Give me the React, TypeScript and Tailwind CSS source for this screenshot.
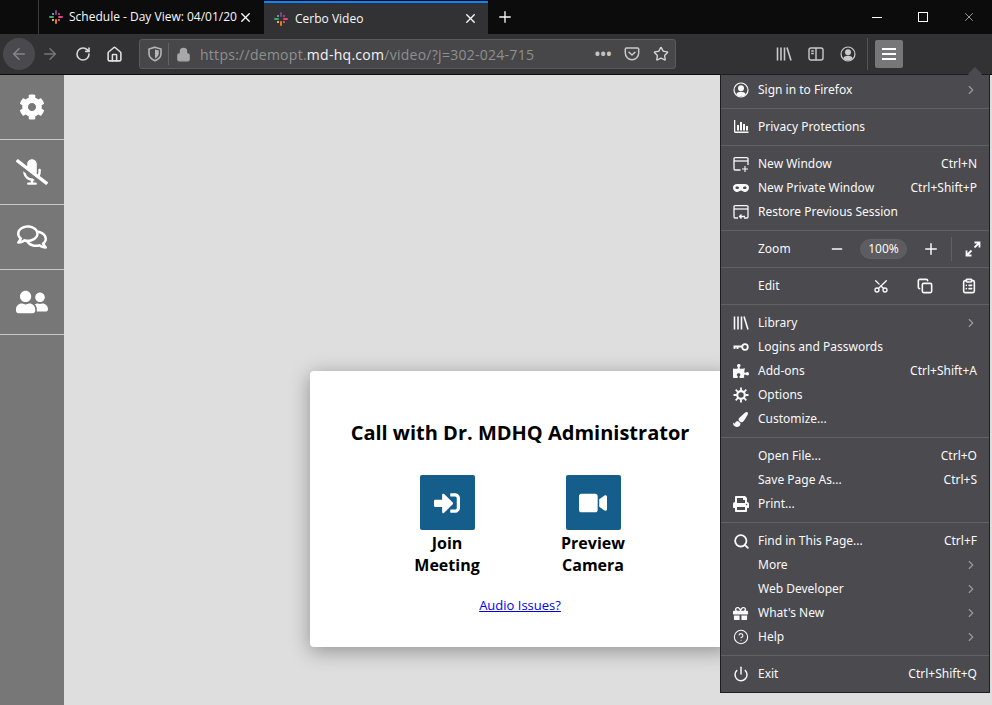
import type { ReactNode } from "react";
import { FaCog, FaMicrophoneSlash, FaRegComments, FaUserFriends, FaSignInAlt, FaVideo, FaPuzzlePiece, FaPaintBrush, FaPrint, FaGift } from "react-icons/fa";
import { Search, X, Plus, Minus, ChevronRight, ArrowLeft, ArrowRight, RotateCw, Home, Lock, Star, Scissors, Copy, ClipboardList, Power, CircleHelp } from "lucide-react";

// Small inline drawings for the Firefox chrome icons
function Favicon() {
  return (
    <svg width="16" height="16" viewBox="0 0 16 16">
      <rect x="7" y="1" width="2" height="5" rx="1" fill="#8e3a8c" />
      <rect x="7" y="10" width="2" height="5" rx="1" fill="#e8762d" />
      <rect x="1" y="7" width="5" height="2" rx="1" fill="#3fa66b" />
      <rect x="10" y="7" width="5" height="2" rx="1" fill="#d4497f" />
      <rect x="4" y="4" width="2" height="2" fill="#3aa6a0" />
      <rect x="10" y="4" width="2" height="2" fill="#c22f6d" />
      <rect x="4" y="10" width="2" height="2" fill="#e3b23c" />
      <rect x="10" y="10" width="2" height="2" fill="#d9532c" />
    </svg>
  );
}

function LibraryIcon({ size = 16 }: { size?: number }) {
  return (
    <svg width={size} height={size} viewBox="0 0 16 16" fill="none" stroke="currentColor" strokeWidth="1.6">
      <path d="M1.5 1.5v13M5 1.5v13M8.5 1.5v13M11 1.5l4 13" />
    </svg>
  );
}

function AvatarIcon({ size = 16 }: { size?: number }) {
  return (
    <svg width={size} height={size} viewBox="0 0 16 16">
      <circle cx="8" cy="8" r="7" fill="none" stroke="currentColor" strokeWidth="1.2" />
      <circle cx="8" cy="6.2" r="3" fill="currentColor" />
      <path d="M3.2 12.4C4 10.4 6 9.8 8 9.8s4 .6 4.8 2.6A6.5 6.5 0 0 1 8 14.5a6.5 6.5 0 0 1-4.8-2.1z" fill="currentColor" />
    </svg>
  );
}

function SidebarIcon() {
  return (
    <svg width="16" height="16" viewBox="0 0 16 16" fill="none" stroke="currentColor" strokeWidth="1.4">
      <rect x="1" y="2" width="14" height="12" rx="2" />
      <path d="M8 2v12M3.2 5h2.6M3.2 7.5h2.6" />
    </svg>
  );
}

function ShieldIcon() {
  return (
    <svg width="16" height="16" viewBox="0 0 16 16">
      <path d="M8 1.2 14 3v4.5c0 3.6-2.6 6-6 7.3-3.4-1.3-6-3.7-6-7.3V3z" fill="none" stroke="currentColor" strokeWidth="1.6" />
      <path d="M8 3.5 11.8 4.6v3c0 2.2-1.6 3.8-3.8 4.8z" fill="currentColor" />
    </svg>
  );
}

function PocketIcon() {
  return (
    <svg width="16" height="16" viewBox="0 0 16 16" fill="none" stroke="currentColor" strokeWidth="1.5" strokeLinecap="round" strokeLinejoin="round">
      <path d="M2.5 2h11A1.2 1.2 0 0 1 14.7 3.2V7A6.7 6.7 0 0 1 1.3 7V3.2A1.2 1.2 0 0 1 2.5 2z" />
      <path d="M5 6.2 8 9l3-2.8" />
    </svg>
  );
}

function BarsIcon() {
  return (
    <svg width="16" height="16" viewBox="0 0 16 16" fill="currentColor">
      <path d="M1 1h1.3v11.5H15.5V14H2.5A1.5 1.5 0 0 1 1 12.5z" />
      <rect x="4" y="6" width="2" height="5.5" />
      <rect x="7" y="3" width="2" height="8.5" />
      <rect x="10" y="5" width="2" height="6.5" />
      <rect x="13" y="7" width="2" height="4.5" />
    </svg>
  );
}

function NewWindowIcon() {
  return (
    <svg width="16" height="16" viewBox="0 0 16 16" fill="none" stroke="currentColor" strokeWidth="1.3">
      <path d="M7.5 14H2.2A1.2 1.2 0 0 1 1 12.8V2.8A1.2 1.2 0 0 1 2.2 1.6h11.6A1.2 1.2 0 0 1 15 2.8V9" />
      <path d="M1 5h14" />
      <path d="M12 10v6M9 13h6" strokeWidth="1.1" />
    </svg>
  );
}

function RestoreIcon() {
  return (
    <svg width="16" height="16" viewBox="0 0 16 16" fill="none" stroke="currentColor" strokeWidth="1.3">
      <path d="M5 14H2.2A1.2 1.2 0 0 1 1 12.8V2.8A1.2 1.2 0 0 1 2.2 1.6h11.6A1.2 1.2 0 0 1 15 2.8v10A1.2 1.2 0 0 1 13.8 14H11" />
      <path d="M1 5h14" />
      <path d="M12 12.500H6.500M8.500 10.500l-2 2 2 2" />
    </svg>
  );
}

function MaskIcon() {
  return (
    <svg width="16" height="16" viewBox="0 0 16 16">
      <path fillRule="evenodd" fill="currentColor" d="M4 4h8c2.200 0 4 1.300 4 3.500S14.200 12 12 12c-1.800 0-2.800-1.500-4-1.500S5.800 12 4 12C1.800 12 0 9.700 0 7.500S1.800 4 4 4zm.2 2.600c-1 0-1.800.4-1.800 1.100s1 1.300 2 1.300 1.600-.5 1.600-1.100-.8-1.300-1.800-1.300zm7.600 0c-1 0-1.800.7-1.800 1.300S10.600 9 11.600 9s2-.6 2-1.300-.8-1.100-1.800-1.100z" />
    </svg>
  );
}

function KeyIcon() {
  return (
    <svg width="16" height="16" viewBox="0 0 16 16" fill="none" stroke="currentColor">
      <circle cx="12" cy="8" r="2.800" strokeWidth="1.800" />
      <path d="M9 7.500H0.500M1.500 7.500v2.500M4.500 7.500v2.500" strokeWidth="1.800" />
    </svg>
  );
}

function ExpandIcon() {
  return (
    <svg width="16" height="16" viewBox="0 0 16 16" fill="none" stroke="currentColor" strokeWidth="1.800">
      <path d="M9.500 1.500h5v5M14 2 9.500 6.500M6.500 14.500h-5v-5M2 14l4.500-4.500" />
    </svg>
  );
}

function GearOutline() {
  return (
    <svg width="16" height="16" viewBox="0 0 16 16" fill="none" stroke="currentColor">
      <circle cx="8" cy="8" r="3.800" strokeWidth="2.200" />
      <path d="M8 .5v3M8 12.500v3M.5 8h3M12.500 8h3M2.700 2.700l2.100 2.100M11.200 11.200l2.100 2.100M13.300 2.700l-2.100 2.100M4.800 11.200l-2.100 2.100" strokeWidth="1.800" />
    </svg>
  );
}

function Row({ icon, label, shortcut, arrow }: { icon?: ReactNode; label: string; shortcut?: string; arrow?: boolean }) {
  return (
    <div className="flex h-6 items-center pl-[12px] pr-[12px]">
      <span className="flex w-[25px] shrink-0 items-center text-[#f9f9fa]">{icon}</span>
      <span className="flex-1 whitespace-nowrap">{label}</span>
      {shortcut && <span className="whitespace-nowrap">{shortcut}</span>}
      {arrow && <ChevronRight size={14} className="mr-[-1px] text-[#9a9a9e]" />}
    </div>
  );
}

function Section({ children }: { children: ReactNode }) {
  return <div className="border-t border-[#616165] py-[6px]">{children}</div>;
}

const sideItems = [
  <FaCog key="cog" size={26} />,
  <FaMicrophoneSlash key="mic" size={32} />,
  <FaRegComments key="chat" size={30} />,
  <FaUserFriends key="users" size={32} />,
];

export default function App() {
  return (
    <div className="relative flex h-[705px] w-[992px] flex-col overflow-hidden bg-[#dedede] font-['Open_Sans','Noto_Sans',sans-serif]">
      {/* Tab strip */}
      <div className="flex h-[34px] shrink-0 bg-[#0c0c0d] text-[12px] text-[#f9f9fa]">
        <div className="ml-[38px] flex w-[226px] items-center border-l border-[#3a3a3c] pl-[9px] pr-[11px]">
          <Favicon />
          <span className="ml-[5px] flex-1 overflow-hidden whitespace-nowrap">Schedule - Day View: 04/01/20</span>
          <X size={15} strokeWidth={2.2} />
        </div>
        <div className="flex w-[224px] items-center border-t-2 border-[#0a84ff] bg-[#323234] pl-[9px] pr-[10px] mt-px">
          <Favicon />
          <span className="ml-[6px] flex-1 whitespace-nowrap">Cerbo Video</span>
          <X size={15} strokeWidth={2.2} />
        </div>
        <div className="ml-[8px] flex items-center">
          <Plus size={18} strokeWidth={1.8} />
        </div>
        <div className="ml-auto flex items-center">
          <div className="flex w-[46px] justify-center"><span className="block h-px w-[10px] bg-white" /></div>
          <div className="flex w-[46px] justify-center"><span className="block h-[10px] w-[10px] border border-white" /></div>
          <div className="flex w-[46px] justify-center"><X size={14} strokeWidth={1} /></div>
        </div>
      </div>

      {/* Toolbar */}
      <div className="flex h-[41px] shrink-0 items-center border-b border-[#0c0c0d] bg-[#323234] text-[#f9f9fa]">
        <div className="ml-[3px] flex h-8 w-8 items-center justify-center rounded-full bg-[#4a4a4e] text-[#87878a]">
          <ArrowLeft size={18} />
        </div>
        <div className="ml-[6px] text-[#77777a]"><ArrowRight size={18} /></div>
        <div className="ml-[16px] text-[#d7d7d8]"><RotateCw size={16} strokeWidth={2.4} /></div>
        <div className="ml-[15px] text-[#e0e0e1]"><Home size={17} strokeWidth={2.2} /></div>
        <div className="ml-[16px] flex h-[30px] w-[537px] items-center rounded-[3px] border border-[#5b5b5e] bg-[#474749] text-[#b5b5b7]">
          <span className="ml-[7px]"><ShieldIcon /></span>
          <span className="ml-[5px] h-[22px] w-px bg-[#626265]" />
          <Lock size={15} className="ml-[7px] text-[#a8a8aa]" fill="currentColor" />
          <span className="ml-[9px] flex-1 whitespace-nowrap text-[14px] tracking-[0.27px] text-[#8f8f91]">
            https://demopt.<span className="text-[#f4f4f5]">md-hq.com</span>/video/?j=302-024-715
          </span>
          <span className="mr-[12px] text-[14px] font-bold leading-none tracking-[0.5px] text-[#c4c4c5]">•••</span>
          <span className="mr-[13px] text-[#c9c9ca]"><PocketIcon /></span>
          <Star size={16} strokeWidth={2} className="mr-[6px] text-[#d7d7d8]" />
        </div>
        <div className="ml-[100px] text-[#c9c9ca]"><LibraryIcon /></div>
        <div className="ml-[16px] text-[#c9c9ca]"><SidebarIcon /></div>
        <div className="ml-[16px] text-[#c9c9ca]"><AvatarIcon /></div>
        <span className="ml-[11px] h-[32px] w-px bg-[#545457]" />
        <div className="ml-[7px] flex h-[28px] w-[28px] items-center justify-center rounded-[2px] bg-[#77777a]">
          <span className="flex w-[14px] flex-col gap-[3px]">
            <span className="h-[2px] bg-white" />
            <span className="h-[2px] bg-white" />
            <span className="h-[2px] bg-white" />
          </span>
        </div>
      </div>

      {/* Page */}
      <div className="flex flex-1">
        <div className="w-16 shrink-0 bg-[#777777] text-white">
          {sideItems.map((icon, i) => (
            <div key={i} className="flex h-[65px] items-center justify-center border-b border-[#c8c8c8]">
              {icon}
            </div>
          ))}
        </div>
        <div className="ml-[246px] mt-[296px]">
          <div className="flex h-[276px] w-[420px] flex-col items-center rounded-[4px] bg-white pt-[47px] text-black shadow-[0_4px_20px_rgba(0,0,0,0.35)]">
            <h1 className="text-[20px] font-bold leading-[30px]">Call with Dr. MDHQ Administrator</h1>
            <div className="mt-[27px] flex gap-[66px] text-center text-[16px] font-bold leading-[22px]">
              <div className="flex w-[80px] flex-col items-center">
                <div className="flex h-[55px] w-[55px] items-center justify-center rounded-[2px] bg-[#155e8b] text-white">
                  <FaSignInAlt size={26} />
                </div>
                <span className="mt-[2px]">Join<br />Meeting</span>
              </div>
              <div className="flex w-[80px] flex-col items-center">
                <div className="flex h-[55px] w-[55px] items-center justify-center rounded-[2px] bg-[#155e8b] text-white">
                  <FaVideo size={28} />
                </div>
                <span className="mt-[2px]">Preview<br />Camera</span>
              </div>
            </div>
            <a href="#" className="mt-[20px] text-[13px] text-[#0000ee] underline">Audio Issues?</a>
          </div>
        </div>
      </div>

      {/* App menu overlay */}
      <div className="absolute left-[720px] top-[74px] w-[270px] border border-[#1e1e20] bg-[#4a4a4f] pt-[3px] font-['Noto_Sans','Open_Sans',sans-serif] text-[12px] text-[#f9f9fa]">
        <span className="absolute right-[9px] top-[-6px] block h-[10px] w-[10px] rotate-45 bg-[#4a4a4f]" />
        <div className="pb-[6px]">
          <Row icon={<AvatarIcon />} label="Sign in to Firefox" arrow />
        </div>
        <Section><Row icon={<BarsIcon />} label="Privacy Protections" /></Section>
        <Section>
          <Row icon={<NewWindowIcon />} label="New Window" shortcut="Ctrl+N" />
          <Row icon={<MaskIcon />} label="New Private Window" shortcut="Ctrl+Shift+P" />
          <Row icon={<RestoreIcon />} label="Restore Previous Session" />
        </Section>
        <div className="flex h-[37px] items-center border-t border-[#616165] pl-[37px]">
          <span className="w-[71px]">Zoom</span>
          <Minus size={16} strokeWidth={2} />
          <span className="ml-[15px] flex h-5 w-[47px] items-center justify-center rounded-full border border-[#616165] bg-[#5c5c61] text-[12px]">100%</span>
          <Plus size={18} strokeWidth={2} className="ml-[15px]" />
          <span className="ml-[11px] h-6 w-px bg-[#616165]" />
          <span className="ml-[13px]"><ExpandIcon /></span>
        </div>
        <div className="flex h-[37px] items-center border-t border-[#616165] pl-[37px]">
          <span className="w-[115px]">Edit</span>
          <Scissors size={16} className="-scale-x-100 rotate-90" />
          <Copy size={16} strokeWidth={2.4} className="ml-[28px]" />
          <ClipboardList size={16} strokeWidth={2.4} className="ml-[28px]" />
        </div>
        <Section>
          <Row icon={<LibraryIcon />} label="Library" arrow />
          <Row icon={<KeyIcon />} label="Logins and Passwords" />
          <Row icon={<FaPuzzlePiece size={16} />} label="Add-ons" shortcut="Ctrl+Shift+A" />
          <Row icon={<GearOutline />} label="Options" />
          <Row icon={<FaPaintBrush size={15} />} label="Customize..." />
        </Section>
        <Section>
          <Row label="Open File..." shortcut="Ctrl+O" />
          <Row label="Save Page As..." shortcut="Ctrl+S" />
          <Row icon={<FaPrint size={16} />} label="Print..." />
        </Section>
        <Section>
          <Row icon={<Search size={17} strokeWidth={2.6} />} label="Find in This Page..." shortcut="Ctrl+F" />
          <Row label="More" arrow />
          <Row label="Web Developer" arrow />
          <Row icon={<FaGift size={15} />} label="What's New" arrow />
          <Row icon={<CircleHelp size={16} strokeWidth={1.6} />} label="Help" arrow />
        </Section>
        <Section><Row icon={<Power size={16} strokeWidth={2.2} />} label="Exit" shortcut="Ctrl+Shift+Q" /></Section>
      </div>
    </div>
  );
}
